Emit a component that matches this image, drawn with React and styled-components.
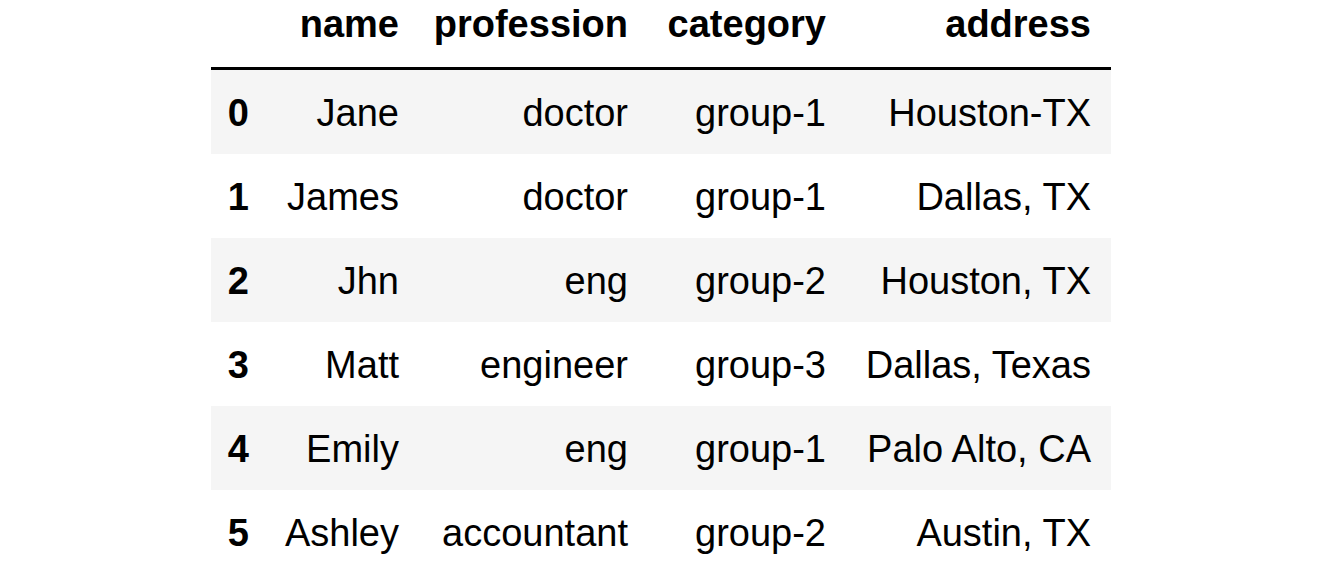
import React from 'react';
import styled, { createGlobalStyle } from 'styled-components';

const GlobalStyle = createGlobalStyle`
    body {
        margin: 0;
        background: #fff;
        font-family: 'Liberation Sans', Arial, Helvetica, sans-serif;
        color: #000;
    }
`;

const Table = styled.table`
    margin: 0 auto;
    width: 900px;
    table-layout: fixed;
    border-collapse: separate;
    border-spacing: 0;
    font-size: 38px;
    line-height: 43px;
`;

const HeadCell = styled.th`
    text-align: right;
    font-weight: 700;
    padding: 3px 20px 21px 10px;
    border-bottom: 3px solid #000;
    white-space: nowrap;
`;

const Row = styled.tr`
    background: ${(p) => (p.$striped ? '#f5f5f5' : '#fff')};
`;

const IndexCell = styled.th`
    text-align: right;
    font-weight: 700;
    padding: 22px 20px 19px 10px;
    white-space: nowrap;
`;

const Cell = styled.td`
    text-align: right;
    padding: 22px 20px 19px 10px;
    white-space: nowrap;
`;

const columns = ['name', 'profession', 'category', 'address'];
const widths = [58, 150, 229, 198, 265];

const rows = [
    ['Jane', 'doctor', 'group-1', 'Houston-TX'],
    ['James', 'doctor', 'group-1', 'Dallas, TX'],
    ['Jhn', 'eng', 'group-2', 'Houston, TX'],
    ['Matt', 'engineer', 'group-3', 'Dallas, Texas'],
    ['Emily', 'eng', 'group-1', 'Palo Alto, CA'],
    ['Ashley', 'accountant', 'group-2', 'Austin, TX'],
];

const App = () => {
    return (
        <>
            <GlobalStyle />
            <Table>
                <colgroup>
                    {widths.map((w, i) => (
                        <col key={i} style={{ width: w }} />
                    ))}
                </colgroup>
                <thead>
                    <tr>
                        <HeadCell />
                        {columns.map((c) => (
                            <HeadCell key={c}>{c}</HeadCell>
                        ))}
                    </tr>
                </thead>
                <tbody>
                    {rows.map((r, i) => (
                        <Row key={i} $striped={i % 2 === 0}>
                            <IndexCell>{i}</IndexCell>
                            {r.map((v, j) => (
                                <Cell key={j}>{v}</Cell>
                            ))}
                        </Row>
                    ))}
                </tbody>
            </Table>
        </>
    );
};

export default App;
